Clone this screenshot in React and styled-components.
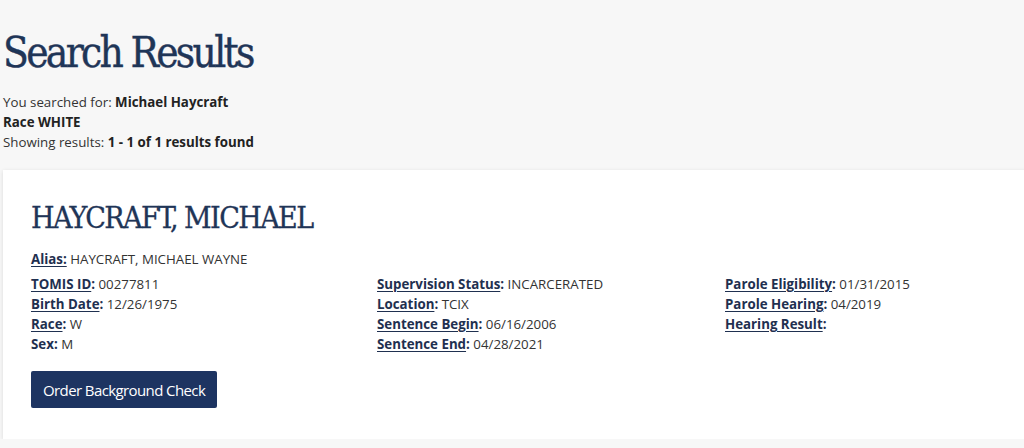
import styled, { createGlobalStyle } from 'styled-components';

const GlobalStyle = createGlobalStyle`
  html, body {
    margin: 0;
    padding: 0;
    background: #f7f7f7;
    overflow: hidden;
  }
  body {
    font-family: 'Open Sans', 'Liberation Sans', sans-serif;
    font-size: 13.3px;
    color: #333;
  }
`;

const records = [
  [
    { label: 'TOMIS ID', value: '00277811' },
    { label: 'Birth Date', value: '12/26/1975' },
    { label: 'Race', value: 'W' },
    { label: 'Sex', value: 'M', plain: true },
  ],
  [
    { label: 'Supervision Status', value: 'INCARCERATED' },
    { label: 'Location', value: 'TCIX' },
    { label: 'Sentence Begin', value: '06/16/2006' },
    { label: 'Sentence End', value: '04/28/2021' },
  ],
  [
    { label: 'Parole Eligibility', value: '01/31/2015' },
    { label: 'Parole Hearing', value: '04/2019' },
    { label: 'Hearing Result', value: '' },
  ],
];

export default function App() {
  return (
    <>
      <GlobalStyle />
      <Page>
        <Header>
          <Title>Search Results</Title>
          <Summary>
            <Line>
              You searched for: <b>Michael Haycraft</b>
            </Line>
            <Line>
              <b>Race WHITE</b>
            </Line>
            <Line>
              Showing results: <b>1 - 1 of 1 results found</b>
            </Line>
          </Summary>
        </Header>

        <Card>
          <Name>HAYCRAFT, MICHAEL</Name>
          <Line>
            <Label>
              <u>Alias:</u>
            </Label>{' '}
            HAYCRAFT, MICHAEL WAYNE
          </Line>
          <Columns>
            {records.map((col, i) => (
              <Column key={i}>
                {col.map((item) => (
                  <Line key={item.label}>
                    <Label>
                      {item.plain ? item.label : <u>{item.label}</u>}:
                    </Label>
                    {item.value && ` ${item.value}`}
                  </Line>
                ))}
              </Column>
            ))}
          </Columns>
          <OrderBtn>Order Background Check</OrderBtn>
        </Card>
      </Page>
    </>
  );
}

const Page = styled.div`
  width: 100%;
  overflow: hidden;
`;

const Header = styled.div`
  padding: 28px 0 18px 3px;
`;

const Title = styled.h1`
  margin: 0 0 14px 0;
  font-family: 'DejaVu Serif Condensed', 'DejaVu Serif', 'Liberation Serif', serif;
  font-stretch: condensed;
  font-weight: 400;
  font-size: 42px;
  line-height: 50px;
  letter-spacing: -2.7px;
  color: #1f3557;
  -webkit-text-stroke: 0.4px #1f3557;
`;

const Summary = styled.div`
  line-height: 20px;
`;

const Line = styled.div`
  line-height: 20px;
  white-space: nowrap;

  b {
    font-weight: 700;
    color: #222;
  }
`;

const Card = styled.div`
  margin: 0 -20px 0 3px;
  background: #fff;
  box-shadow: 0 1px 4px rgba(0, 0, 0, 0.12);
  padding: 28px 28px 31px 28px;
`;

const Name = styled.h2`
  margin: 0 0 11px 0;
  font-family: 'DejaVu Serif Condensed', 'DejaVu Serif', 'Liberation Serif', serif;
  font-stretch: condensed;
  font-weight: 400;
  font-size: 30px;
  line-height: 40px;
  letter-spacing: -1.6px;
  color: #1f3557;
  -webkit-text-stroke: 0.3px #1f3557;
`;

const Label = styled.span`
  font-weight: 700;
  color: #1f3050;

  u {
    text-underline-offset: 2px;
  }
`;

const Columns = styled.div`
  display: grid;
  grid-template-columns: 346px 348px 1fr;
  margin-top: 5px;
`;

const Column = styled.div`
  display: flex;
  flex-direction: column;
`;

const OrderBtn = styled.button`
  margin-top: 17px;
  display: inline-block;
  background: #1d3461;
  color: #fff;
  border: none;
  border-radius: 2px;
  padding: 0 12px;
  height: 37px;
  white-space: nowrap;
  font-family: 'Open Sans', 'Liberation Sans', sans-serif;
  font-size: 15px;
  letter-spacing: -0.6px;
  cursor: pointer;
`;
